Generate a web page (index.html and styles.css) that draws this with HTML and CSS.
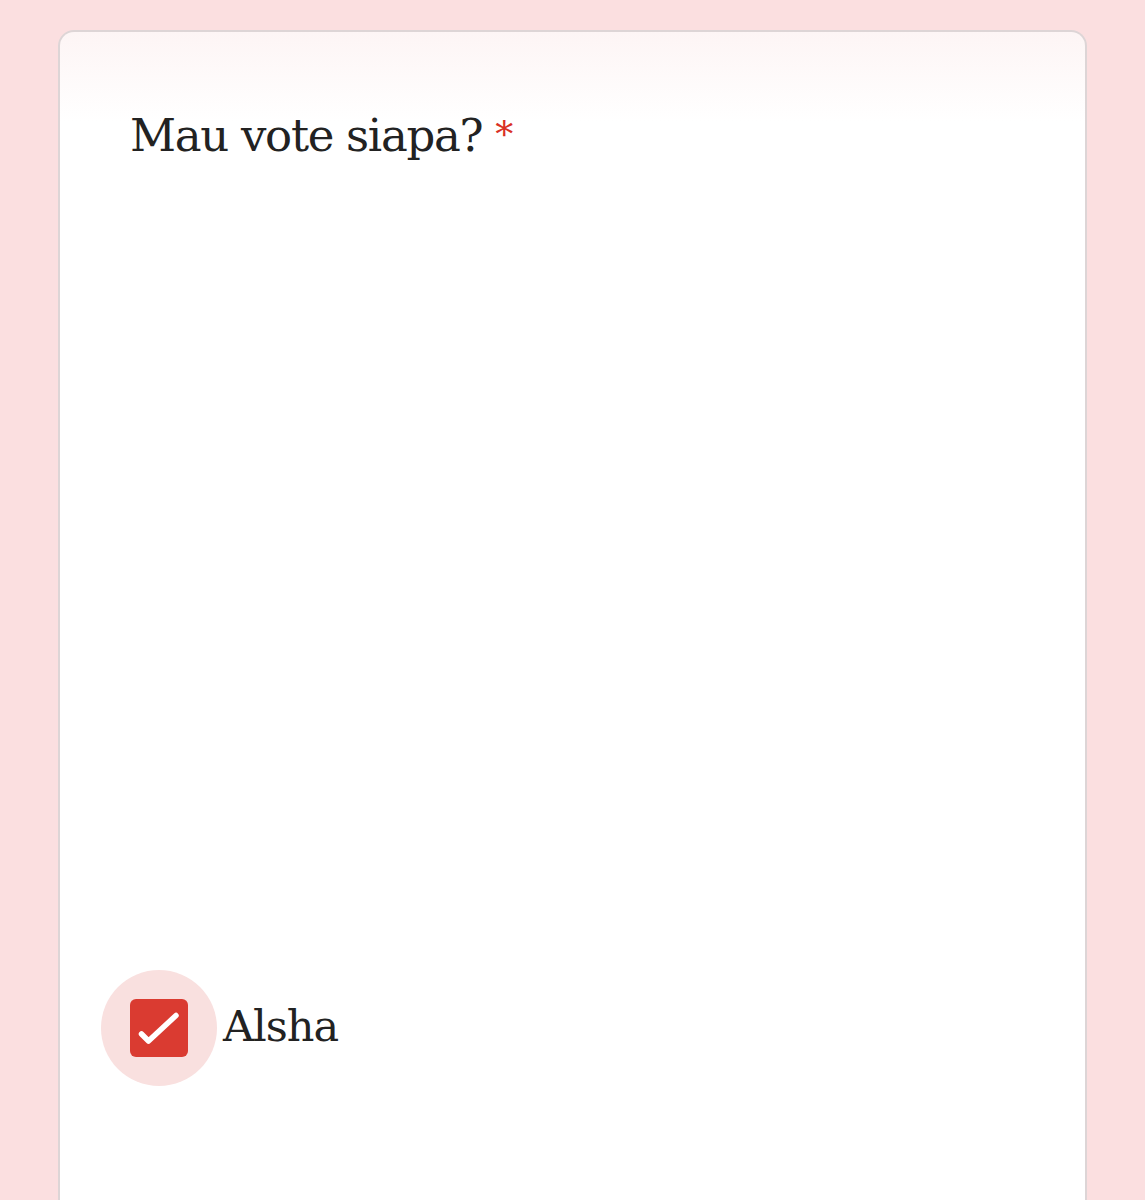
FILE: index.html
```html
<!DOCTYPE html>
<html lang="id">
<head>
<meta charset="utf-8">
<title>Mau vote siapa?</title>
<link rel="stylesheet" href="styles.css">
</head>
<body>
<main class="page">
  <section class="card">
    <h1 class="question">Mau vote siapa?<span class="required">*</span></h1>
    <div class="options">
      <label class="option">
        <span class="halo">
          <span class="box">
            <svg class="check" viewBox="0 0 58 58" width="58" height="58" aria-hidden="true">
              <path d="M11.5 35 L18.5 42 L46 16.5" fill="none" stroke="#ffffff" stroke-width="5.5" stroke-linecap="round" stroke-linejoin="round"/>
            </svg>
          </span>
        </span>
        <span class="option-label">Alsha</span>
      </label>
    </div>
  </section>
</main>
</body>
</html>
```
FILE: styles.css
```css
html, body {
  margin: 0;
  padding: 0;
}
body {
  background: #fbdfe0;
  font-family: "DejaVu Serif", "Liberation Serif", serif;
  color: #202124;
  height: 1200px;
  overflow: hidden;
}
.page {
  padding: 30px 58px 0 58px;
}
.card {
  background: linear-gradient(#fdf5f5 0, #ffffff 90px);
  border: 2px solid #ddd5d6;
  border-bottom: none;
  border-radius: 16px 16px 0 0;
  height: 1300px;
  padding: 75px 0 0 70px;
  box-sizing: border-box;
}
.question {
  margin: 0;
  font-weight: normal;
  font-size: 45px;
  line-height: 56px;
  letter-spacing: -1.3px;
  color: #222222;
}
.required {
  color: #d93025;
  font-size: 36px;
  letter-spacing: 0;
  margin-left: 13px;
  vertical-align: 4px;
}
.options {
  margin-top: 806px;
  margin-left: -29px;
}
.option {
  display: flex;
  align-items: center;
  gap: 6px;
}
.halo {
  width: 116px;
  height: 116px;
  border-radius: 50%;
  background: #f9e0df;
  display: flex;
  align-items: center;
  justify-content: center;
}
.box {
  width: 58px;
  height: 58px;
  border-radius: 6px;
  background: #da3b31;
  display: block;
}
.check {
  display: block;
}
.option-label {
  font-size: 43px;
  line-height: 50px;
  letter-spacing: -1px;
  padding-bottom: 4px;
  color: #222222;
}
```
